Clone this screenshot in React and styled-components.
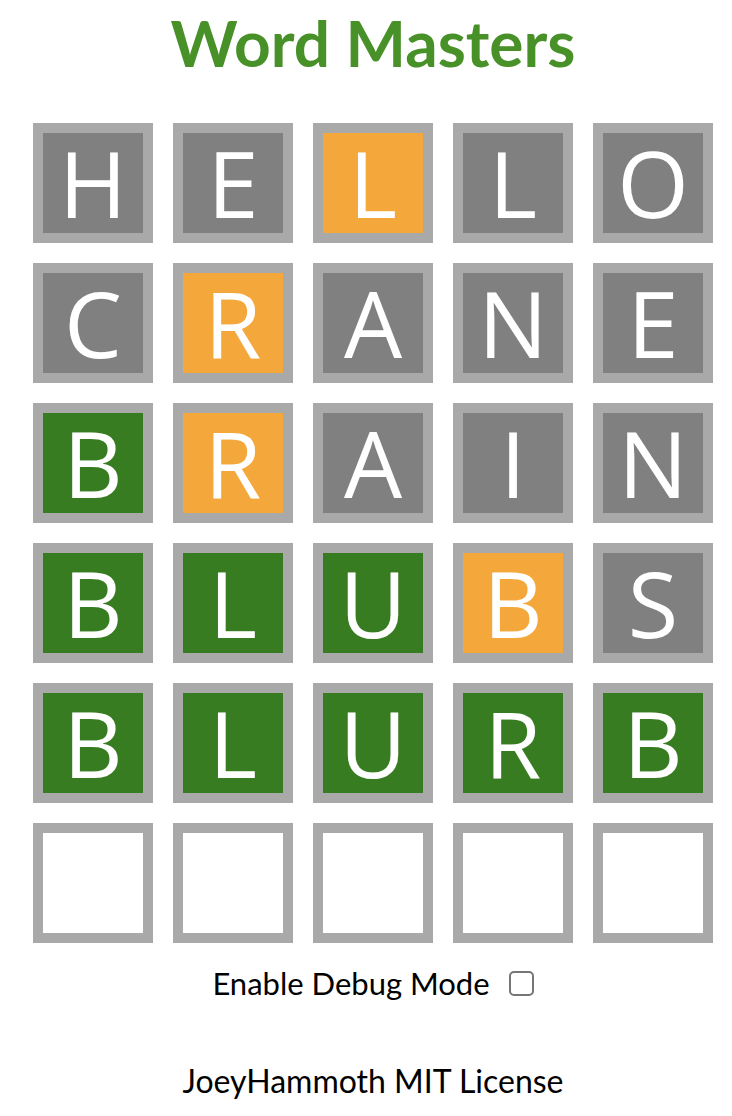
import React from 'react';
import styled, { createGlobalStyle } from 'styled-components';

const GlobalStyle = createGlobalStyle`
  body {
    margin: 0;
    background: #fff;
    font-family: "Open Sans", "DejaVu Sans", sans-serif;
  }
`;

const AppWrap = styled.div`
  width: 700px;
  margin-left: 23px;
  display: flex;
  flex-direction: column;
  align-items: center;
`;

const Title = styled.h1`
  margin: 0;
  padding-top: 3px;
  font-family: Lato, "Open Sans", sans-serif;
  font-size: 64px;
  font-weight: 700;
  line-height: 80px;
  color: #489028;
`;

const Board = styled.div`
  margin-top: 30px;
  display: flex;
  flex-direction: column;
`;

const Row = styled.div`
  display: flex;
`;

const tileColors = {
  absent: '#808080',
  present: '#f4a83c',
  correct: '#387c22',
  empty: '#fff',
};

const Tile = styled.div`
  width: 100px;
  height: 100px;
  margin: 10px;
  border: 10px solid #a9a9a9;
  background: ${(p) => tileColors[p.$state]};
  color: #fff;
  font-size: 92px;
  line-height: 100px;
  display: flex;
  align-items: center;
  justify-content: center;
`;

const DebugLabel = styled.label`
  margin-top: 9px;
  display: flex;
  align-items: center;
  gap: 19px;
  font-family: Lato, "Open Sans", sans-serif;
  font-size: 31px;
  line-height: 42px;
  color: #000;
`;

const CheckBox = styled.input`
  appearance: none;
  margin: 0;
  width: 25px;
  height: 25px;
  border: 2px solid #767676;
  border-radius: 5px;
  background: #fff;
`;

const Footer = styled.footer`
  margin-top: 56px;
  font-family: Lato, "Open Sans", sans-serif;
  font-size: 32px;
  line-height: 42px;
  color: #000;
`;

const guesses = [
  ['HELLO', 'aapaa'],
  ['CRANE', 'apaaa'],
  ['BRAIN', 'cpaaa'],
  ['BLUBS', 'cccpa'],
  ['BLURB', 'ccccc'],
  ['     ', 'eeeee'],
];

const codeMap = { a: 'absent', p: 'present', c: 'correct', e: 'empty' };

const App = () => (
  <AppWrap>
    <GlobalStyle />
    <Title>Word Masters</Title>
    <Board>
      {guesses.map(([word, code], r) => (
        <Row key={r}>
          {word.split('').map((ch, i) => (
            <Tile key={i} $state={codeMap[code[i]]}>{ch.trim()}</Tile>
          ))}
        </Row>
      ))}
    </Board>
    <DebugLabel>
      Enable Debug Mode
      <CheckBox type="checkbox" />
    </DebugLabel>
    <Footer>JoeyHammoth MIT License</Footer>
  </AppWrap>
);

export default App;
